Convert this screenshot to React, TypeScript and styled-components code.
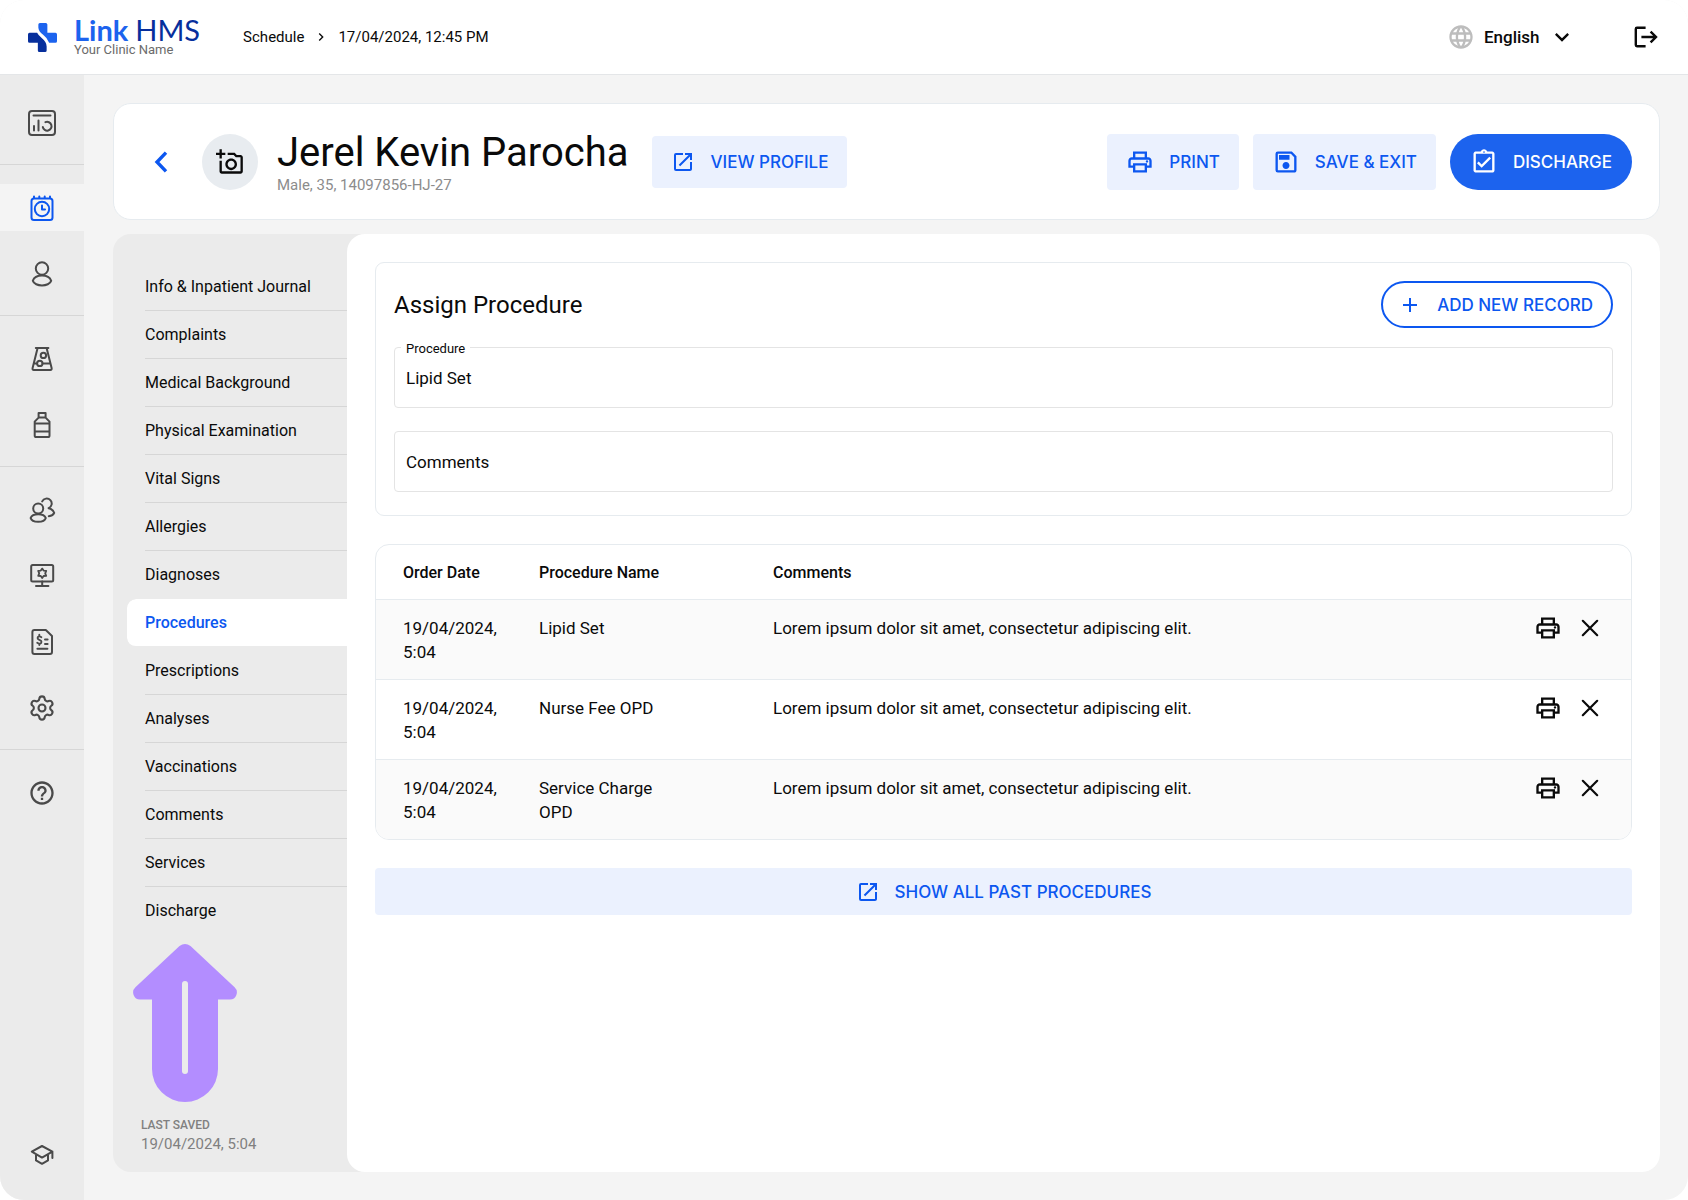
import React from "react";
import styled, { createGlobalStyle, css } from "styled-components";
import {
  MdAdd,
  MdChevronRight,
  MdHelpOutline,
  MdKeyboardArrowDown,
  MdLanguage,
  MdOpenInNew,
  MdOutlineAddAPhoto,
  MdOutlineAssignmentTurnedIn,
  MdOutlinePrint,
  MdOutlineSave,
} from "react-icons/md";
import { Settings } from "lucide-react";

const color = {
  primary: "#0c57f0",
  primaryFill: "#1c63ee",
  primarySoft: "#ebf1fe",
  navy: "#072f9c",
  text: "#0a0a0a",
  muted: "#8c8c8c",
  icon: "#4a4a4a",
  page: "#f4f4f4",
  side: "#ebebeb",
  line: "#d6d6d6",
  border: "#e6ebef",
  white: "#ffffff",
};

const GlobalStyle = createGlobalStyle`
  *, *::before, *::after { box-sizing: border-box; }
  body {
    margin: 0;
    background: ${color.white};
    color: ${color.text};
    font-family: Roboto, "Liberation Sans", sans-serif;
    font-size: 16px;
  }
  a { color: inherit; text-decoration: none; }
  button, input, select { font: inherit; color: inherit; margin: 0; }
  button { cursor: pointer; }
  svg { display: block; flex: none; }
`;

/* ---------- Shell ---------- */

const Page = styled.div`
  display: flex;
  flex-direction: column;
  min-height: 100vh;
  border-radius: 24px;
  overflow: hidden;
  background: ${color.page};
`;

const TopBar = styled.header`
  display: flex;
  align-items: center;
  height: 75px;
  padding: 0 28px;
  background: ${color.white};
  border-bottom: 1px solid #e4e6e8;
`;

const Brand = styled.a`
  display: flex;
  align-items: center;
  gap: 17px;
  margin-right: 43px;
`;

const BrandName = styled.div`
  font-family: Lato, "Liberation Sans", sans-serif;
  font-size: 29px;
  line-height: 26px;
  color: ${color.navy};
  display: flex;
  gap: 7px;

  b {
    color: ${color.primaryFill};
  }
`;

const BrandClinic = styled.div`
  font-size: 13px;
  line-height: 14px;
  color: #6b6b6b;
`;

const Breadcrumb = styled.nav`
  display: flex;
  align-items: center;
  gap: 9px;
  font-size: 15px;
  line-height: 20px;
`;

const TopActions = styled.div`
  display: flex;
  align-items: center;
  gap: 56px;
  margin-left: auto;
`;

const Language = styled.label`
  display: flex;
  align-items: center;
  gap: 9px;
  position: relative;
  color: #bdbdbd;
`;

const LanguageSelect = styled.select`
  appearance: none;
  border: 0;
  background: none;
  padding: 0 36px 0 0;
  font-size: 17px;
  font-weight: 500;
  line-height: 24px;
  color: ${color.text};
`;

const SelectArrow = styled(MdKeyboardArrowDown)`
  position: absolute;
  right: 0;
  color: ${color.text};
  pointer-events: none;
`;

const IconButton = styled.button`
  display: grid;
  place-items: center;
  width: 28px;
  height: 28px;
  padding: 0;
  border: 0;
  background: none;
`;

const Body = styled.div`
  display: flex;
  flex: 1;
`;

/* ---------- Main navigation ---------- */

const Rail = styled.nav`
  display: flex;
  flex-direction: column;
  width: 84px;
  flex: none;
  padding: 5px 0 22px;
  background: ${color.side};
  color: ${color.icon};
`;

const RailGroup = styled.div<{ $last?: boolean }>`
  display: flex;
  flex-direction: column;
  gap: 19px;
  padding: 19px 0 18px;
  border-bottom: ${(p) => (p.$last ? "0" : `1px solid ${color.line}`)};
`;

const RailItem = styled.a<{ $active?: boolean }>`
  display: grid;
  place-items: center;
  height: 47px;
  ${(p) =>
    p.$active &&
    css`
      background: ${color.page};
      color: ${color.primary};
    `}
`;

const RailFoot = styled.div`
  margin-top: auto;
`;

/* ---------- Page content ---------- */

const Main = styled.main`
  display: flex;
  flex-direction: column;
  flex: 1;
  min-width: 0;
  gap: 14px;
  padding: 28px 28px 28px 29px;
`;

const PatientCard = styled.section`
  display: flex;
  align-items: center;
  height: 117px;
  padding: 0 27px 0 33px;
  border: 1px solid ${color.border};
  border-radius: 18px;
  background: ${color.white};
`;

const BackLink = styled.a`
  margin-right: 27px;
`;

const Avatar = styled.button`
  display: grid;
  place-items: center;
  width: 56px;
  height: 56px;
  padding: 0;
  border: 0;
  border-radius: 50%;
  background: #e8ecf0;
  margin-right: 19px;
`;

const PatientText = styled.div`
  margin-right: 24px;
`;

const PatientName = styled.h1`
  margin: 0;
  font-size: 40px;
  line-height: 46px;
  font-weight: 400;
`;

const PatientMeta = styled.p`
  margin: 0;
  font-size: 15px;
  line-height: 18px;
  color: ${color.muted};
`;

const Actions = styled.div`
  display: flex;
  gap: 14px;
  margin-left: auto;
`;

type ButtonProps = { $size?: "sm" | "md" | "lg"; $kind?: "soft" | "solid" | "outline"; $block?: boolean };

const buttonHeight = { sm: 47, md: 52, lg: 56 };

const Button = styled.button<ButtonProps>`
  display: ${(p) => (p.$block ? "flex" : "inline-flex")};
  align-items: center;
  justify-content: center;
  gap: 15px;
  height: ${(p) => buttonHeight[p.$size ?? "sm"]}px;
  padding: 0 19px;
  border: 0;
  border-radius: 4px;
  font-family: Inter, Roboto, sans-serif;
  font-size: 17px;
  line-height: 24px;
  font-weight: 500;
  white-space: nowrap;
  color: ${color.primary};
  background: ${color.primarySoft};

  ${(p) =>
    p.$kind === "solid" &&
    css`
      padding: 0 20px;
      border-radius: 28px;
      color: ${color.white};
      background: ${color.primaryFill};
    `}

  ${(p) =>
    p.$kind === "outline" &&
    css`
      padding: 0 18px 0 15px;
      border: 2px solid ${color.primary};
      border-radius: 24px;
      background: ${color.white};
    `}
`;

const Panel = styled.div`
  display: flex;
  flex: 1;
  border-radius: 18px;
  background: ${color.side};
`;

/* ---------- Record sections ---------- */

const Sections = styled.aside`
  display: flex;
  flex-direction: column;
  width: 234px;
  flex: none;
  padding: 29px 0 18px;
`;

const SectionLink = styled.a<{ $active?: boolean; $plain?: boolean }>`
  display: flex;
  align-items: center;
  height: 48px;
  margin-left: 32px;
  border-bottom: 1px solid ${(p) => (p.$plain ? "transparent" : color.line)};
  font-size: 16px;
  line-height: 24px;

  ${(p) =>
    p.$active &&
    css`
      margin-left: 14px;
      padding-left: 18px;
      border-radius: 9px 0 0 9px;
      background: ${color.white};
      background-clip: padding-box;
      color: ${color.primary};
      font-weight: 500;
    `}
`;

const SectionsFoot = styled.div`
  display: flex;
  flex-direction: column;
  margin-top: auto;
  padding-left: 20px;
  gap: 14px;
`;

const Saved = styled.div`
  padding-left: 8px;
  color: #808080;
`;

const SavedLabel = styled.div`
  font-size: 12px;
  line-height: 18px;
  font-weight: 500;
`;

const SavedDate = styled.div`
  font-size: 15px;
  line-height: 20px;
`;

/* ---------- Procedures ---------- */

const Content = styled.div`
  display: flex;
  flex-direction: column;
  flex: 1;
  min-width: 0;
  gap: 28px;
  padding: 28px;
  border-radius: 18px;
  background: ${color.white};
`;

const FormCard = styled.section`
  display: flex;
  flex-direction: column;
  padding: 18px 18px 23px;
  border: 1px solid ${color.border};
  border-radius: 9px;
`;

const FormHead = styled.div`
  display: flex;
  align-items: center;
  justify-content: space-between;
  margin-bottom: 19px;
`;

const FormTitle = styled.h2`
  margin: 0;
  font-size: 24px;
  line-height: 32px;
  font-weight: 400;
`;

const Fields = styled.div`
  display: flex;
  flex-direction: column;
  gap: 23px;
`;

const Field = styled.div`
  position: relative;
`;

const FieldLabel = styled.label`
  position: absolute;
  top: -6px;
  left: 7px;
  padding: 0 5px;
  font-size: 13px;
  line-height: 16px;
  background: ${color.white};
`;

const FieldInput = styled.input`
  display: block;
  width: 100%;
  height: 61px;
  padding: 0 11px;
  border: 1px solid #e4e4e4;
  border-radius: 4px;
  background: ${color.white};
  font-size: 17px;

  &::placeholder {
    color: ${color.text};
    opacity: 1;
  }
`;

const TableCard = styled.section`
  border: 1px solid ${color.border};
  border-radius: 14px;
  overflow: hidden;
`;

const Table = styled.table`
  width: 100%;
  table-layout: fixed;
  border-collapse: separate;
  border-spacing: 0;
  font-size: 17px;
  line-height: 24px;
`;

const Column = styled.col<{ $width?: number }>`
  ${(p) => p.$width && `width: ${p.$width}px;`}
`;

const HeadCell = styled.th`
  padding: 16px 0 14px 27px;
  font-size: 16px;
  font-weight: 500;
  text-align: left;
`;

const Row = styled.tr`
  &:nth-child(odd) {
    background: #fafafa;
  }
`;

const Cell = styled.td<{ $narrow?: boolean }>`
  padding: 16px ${(p) => (p.$narrow ? 64 : 0)}px 15px 27px;
  border-top: 1px solid ${color.border};
  vertical-align: top;
`;

const ActionCell = styled.td`
  padding: 14px 27px 0 0;
  border-top: 1px solid ${color.border};
  vertical-align: top;
`;

const RowActions = styled.div`
  display: flex;
  justify-content: flex-end;
  gap: 14px;
`;

/* ---------- Drawings ---------- */

const Glyph = ({ children, width = 2 }: { children: React.ReactNode; width?: number }) => (
  <svg
    width="28"
    height="28"
    viewBox="0 0 28 28"
    fill="none"
    stroke="currentColor"
    strokeWidth={width}
    strokeLinecap="round"
    strokeLinejoin="round"
    aria-hidden="true"
  >
    {children}
  </svg>
);

const LogoMark = () => (
  <svg width="29" height="29" viewBox="0 0 28 28" aria-hidden="true">
    <path
      fill={color.primaryFill}
      d="M11.5 0H17.2Q18.7 0 18.7 1.5V9.3H26.5Q28 9.3 28 11V17.5Q28 19 26.5 19H20.4Q18.6 14.4 14.6 11.4Q10 8 10 4.4V1.5Q10 0 11.5 0Z"
    />
    <path
      fill={color.navy}
      d="M1.5 9.3H8.8Q10.2 12 13.2 14.4Q18 18.2 18 22.6V26.5Q18 28 16.5 28H11Q9.5 28 9.5 26.5V19H1.5Q0 19 0 17.5V11Q0 9.3 1.5 9.3Z"
    />
  </svg>
);

const DashboardIcon = () => (
  <Glyph>
    <rect x="1" y="2" width="26" height="24" rx="3" />
    <path d="M5.5 6.5H22.5M6 17V21.5M10.5 11.5V21.5M17.4 13.2A4.4 4.4 0 1 1 14.8 18" />
  </Glyph>
);

const ScheduleIcon = () => (
  <Glyph>
    <rect x="3.5" y="4.5" width="21" height="21.5" rx="2.5" />
    <path d="M6 2.4V4M11.3 2.4V4M16.7 2.4V4M22 2.4V4M14 11.6V15.4H17" />
    <circle cx="14" cy="15" r="7.2" />
  </Glyph>
);

const PatientIcon = () => (
  <Glyph>
    <circle cx="14" cy="8.5" r="6.2" />
    <path d="M4.8 20.8C6 17.4 10 15.6 14 15.6S22 17.4 23.2 20.8C22.4 23.8 18 25.5 14 25.5S5.6 23.8 4.8 20.8Z" />
  </Glyph>
);

const LabIcon = () => (
  <Glyph>
    <path d="M7.8 3H20.4M9.6 3L4.6 23Q4.2 25 5.8 25H22.4Q24 25 23.6 23L18.6 3M6 18.4H9M14.6 18.4H22" />
    <circle cx="15.4" cy="10.4" r="2.7" />
    <circle cx="11.8" cy="18.4" r="2.7" />
  </Glyph>
);

const PharmacyIcon = () => (
  <Glyph>
    <path d="M10.6 6.6V2H17.6V6.6M10.6 6.6H17.6L21.5 10.6V24.4Q21.5 26 19.9 26H8.3Q6.7 26 6.7 24.4V10.6ZM7 12.4H21.2M7 20.4H21.2" />
  </Glyph>
);

const StaffIcon = () => (
  <Glyph>
    <circle cx="10.2" cy="12.6" r="5" />
    <path d="M2.6 22C3.6 19.4 6.8 18.2 10.2 18.2S16.8 19.4 17.8 22C17 24.6 13.6 25.8 10.2 25.8S3.4 24.6 2.6 22Z" />
    <path d="M14.2 5.4A5 5 0 1 1 20.6 12.2C23.4 12.8 25.4 14.6 26.2 16.8C25.4 18.8 23.4 19.8 20.8 20.2" />
  </Glyph>
);

const SystemIcon = () => (
  <Glyph>
    <rect x="3.2" y="3" width="22" height="16.6" rx="1.5" />
    <path d="M14.2 19.6V24M8 24H20.4" />
    <path
      strokeWidth="1.8"
      d="M14.2 6.6L15.6 8.6L18.2 8.8L17.2 11.3L18.2 13.8L15.6 14L14.2 16L12.8 14L10.2 13.8L11.2 11.3L10.2 8.8L12.8 8.6Z"
    />
  </Glyph>
);

const BillingIcon = () => (
  <Glyph>
    <path d="M17.8 2H6.4Q4.4 2 4.4 4V24Q4.4 26 6.4 26H22Q24 26 24 24V8Z" />
    <path d="M17 11.4H19.6M17 16H19.6M9.4 20.8H19.4" />
    <path strokeWidth="1.8" d="M13.4 9.2Q11.2 7.6 9.8 9.2Q9 11 11.3 11.8Q14.2 12.8 13.2 14.8Q11.6 16.6 9.2 14.8M11.3 6.6V8M11.3 16V17" />
  </Glyph>
);

const AcademyIcon = () => (
  <Glyph>
    <path d="M14 5L24.4 10.6L14 16.6L3.8 10.6ZM8 13.2V19.4L14 22.8L20 19.4V13.2M24.4 10.6V17" />
  </Glyph>
);

const LogoutIcon = () => (
  <Glyph width={2.4}>
    <path strokeLinecap="butt" d="M13.6 4.8H5Q3.8 4.8 3.8 6V22Q3.8 23.2 5 23.2H13.6" />
    <path strokeLinecap="butt" strokeLinejoin="miter" d="M9.4 14H24.4M18.6 8.6L24 14L18.6 19.4" />
  </Glyph>
);

const BackIcon = () => (
  <Glyph width={3.4}>
    <path strokeLinecap="butt" strokeLinejoin="miter" stroke={color.primary} d="M19 4.6L10 14L19 23.4" />
  </Glyph>
);

const CloseIcon = () => (
  <Glyph width={2.2}>
    <path d="M6.8 6.8L21.2 21.2M21.2 6.8L6.8 21.2" />
  </Glyph>
);

const UpArrow = () => (
  <svg width="104" height="158" viewBox="0 0 104 158" aria-hidden="true">
    <path
      fill="#b38dff"
      d="M46.5 2Q52 -2 57.5 2L101.6 43.2A7.2 7.2 0 0 1 97 55.6H85V125A33 33 0 0 1 19 125V55.6H7A7.2 7.2 0 0 1 2.4 43.2Z"
    />
    <rect x="49" y="37" width="6" height="93" rx="3" fill={color.side} />
  </svg>
);

/* ---------- Data ---------- */

type NavEntry = { name: string; icon: React.ReactNode; active?: boolean };

const navGroups: NavEntry[][] = [
  [{ name: "Dashboard", icon: <DashboardIcon /> }],
  [
    { name: "Schedule", icon: <ScheduleIcon />, active: true },
    { name: "Patients", icon: <PatientIcon /> },
  ],
  [
    { name: "Laboratory", icon: <LabIcon /> },
    { name: "Pharmacy", icon: <PharmacyIcon /> },
  ],
  [
    { name: "Staff", icon: <StaffIcon /> },
    { name: "System", icon: <SystemIcon /> },
    { name: "Billing", icon: <BillingIcon /> },
    { name: "Settings", icon: <Settings size={28} strokeWidth={1.8} /> },
  ],
  [{ name: "Help", icon: <MdHelpOutline size={28} /> }],
];

const sections = [
  "Info & Inpatient Journal",
  "Complaints",
  "Medical Background",
  "Physical Examination",
  "Vital Signs",
  "Allergies",
  "Diagnoses",
  "Procedures",
  "Prescriptions",
  "Analyses",
  "Vaccinations",
  "Comments",
  "Services",
  "Discharge",
];
const current = sections.indexOf("Procedures");

const lorem = "Lorem ipsum dolor sit amet, consectetur adipiscing elit.";
const procedures = [
  { date: "19/04/2024, 5:04", name: "Lipid Set", comment: lorem },
  { date: "19/04/2024, 5:04", name: "Nurse Fee OPD", comment: lorem },
  { date: "19/04/2024, 5:04", name: "Service Charge OPD", comment: lorem },
];

/* ---------- App ---------- */

export default function App() {
  return (
    <>
      <GlobalStyle />
      <Page>
        <TopBar>
          <Brand href="#">
            <LogoMark />
            <div>
              <BrandName>
                <b>Link</b>
                <span>HMS</span>
              </BrandName>
              <BrandClinic>Your Clinic Name</BrandClinic>
            </div>
          </Brand>
          <Breadcrumb aria-label="Breadcrumb">
            <a href="#schedule">Schedule</a>
            <MdChevronRight size={16} />
            <span>17/04/2024, 12:45 PM</span>
          </Breadcrumb>
          <TopActions>
            <Language>
              <MdLanguage size={28} />
              <LanguageSelect aria-label="Language" defaultValue="en">
                <option value="en">English</option>
              </LanguageSelect>
              <SelectArrow size={28} />
            </Language>
            <IconButton aria-label="Log out">
              <LogoutIcon />
            </IconButton>
          </TopActions>
        </TopBar>

        <Body>
          <Rail aria-label="Main">
            {navGroups.map((group, i) => (
              <RailGroup key={i} $last={i === navGroups.length - 1}>
                {group.map((item) => (
                  <RailItem key={item.name} href="#" aria-label={item.name} $active={item.active}>
                    {item.icon}
                  </RailItem>
                ))}
              </RailGroup>
            ))}
            <RailFoot>
              <RailItem href="#" aria-label="Academy">
                <AcademyIcon />
              </RailItem>
            </RailFoot>
          </Rail>

          <Main>
            <PatientCard>
              <BackLink href="#" aria-label="Back">
                <BackIcon />
              </BackLink>
              <Avatar aria-label="Add photo">
                <MdOutlineAddAPhoto size={28} />
              </Avatar>
              <PatientText>
                <PatientName>Jerel Kevin Parocha</PatientName>
                <PatientMeta>Male, 35, 14097856-HJ-27</PatientMeta>
              </PatientText>
              <Button $size="md">
                <MdOpenInNew size={24} />
                VIEW PROFILE
              </Button>
              <Actions>
                <Button $size="lg">
                  <MdOutlinePrint size={28} />
                  PRINT
                </Button>
                <Button $size="lg">
                  <MdOutlineSave size={28} />
                  SAVE &amp; EXIT
                </Button>
                <Button $size="lg" $kind="solid">
                  <MdOutlineAssignmentTurnedIn size={28} />
                  DISCHARGE
                </Button>
              </Actions>
            </PatientCard>

            <Panel>
              <Sections>
                {sections.map((name, i) => (
                  <SectionLink
                    key={name}
                    href="#"
                    $active={i === current}
                    $plain={i === current || i === current - 1 || i === sections.length - 1}
                  >
                    {name}
                  </SectionLink>
                ))}
                <SectionsFoot>
                  <UpArrow />
                  <Saved>
                    <SavedLabel>LAST SAVED</SavedLabel>
                    <SavedDate>19/04/2024, 5:04</SavedDate>
                  </Saved>
                </SectionsFoot>
              </Sections>

              <Content>
                <FormCard>
                  <FormHead>
                    <FormTitle>Assign Procedure</FormTitle>
                    <Button $kind="outline">
                      <MdAdd size={24} />
                      ADD NEW RECORD
                    </Button>
                  </FormHead>
                  <Fields>
                    <Field>
                      <FieldInput id="procedure" defaultValue="Lipid Set" />
                      <FieldLabel htmlFor="procedure">Procedure</FieldLabel>
                    </Field>
                    <Field>
                      <FieldInput aria-label="Comments" placeholder="Comments" />
                    </Field>
                  </Fields>
                </FormCard>

                <TableCard>
                  <Table>
                    <colgroup>
                      <Column $width={136} />
                      <Column $width={234} />
                      <Column />
                      <Column $width={120} />
                    </colgroup>
                    <thead>
                      <tr>
                        <HeadCell>Order Date</HeadCell>
                        <HeadCell>Procedure Name</HeadCell>
                        <HeadCell>Comments</HeadCell>
                        <HeadCell aria-label="Actions" />
                      </tr>
                    </thead>
                    <tbody>
                      {procedures.map((row) => (
                        <Row key={row.name}>
                          <Cell>{row.date}</Cell>
                          <Cell $narrow>{row.name}</Cell>
                          <Cell>{row.comment}</Cell>
                          <ActionCell>
                            <RowActions>
                              <IconButton aria-label={`Print ${row.name}`}>
                                <MdOutlinePrint size={28} />
                              </IconButton>
                              <IconButton aria-label={`Remove ${row.name}`}>
                                <CloseIcon />
                              </IconButton>
                            </RowActions>
                          </ActionCell>
                        </Row>
                      ))}
                    </tbody>
                  </Table>
                </TableCard>

                <Button $block>
                  <MdOpenInNew size={24} />
                  SHOW ALL PAST PROCEDURES
                </Button>
              </Content>
            </Panel>
          </Main>
        </Body>
      </Page>
    </>
  );
}
